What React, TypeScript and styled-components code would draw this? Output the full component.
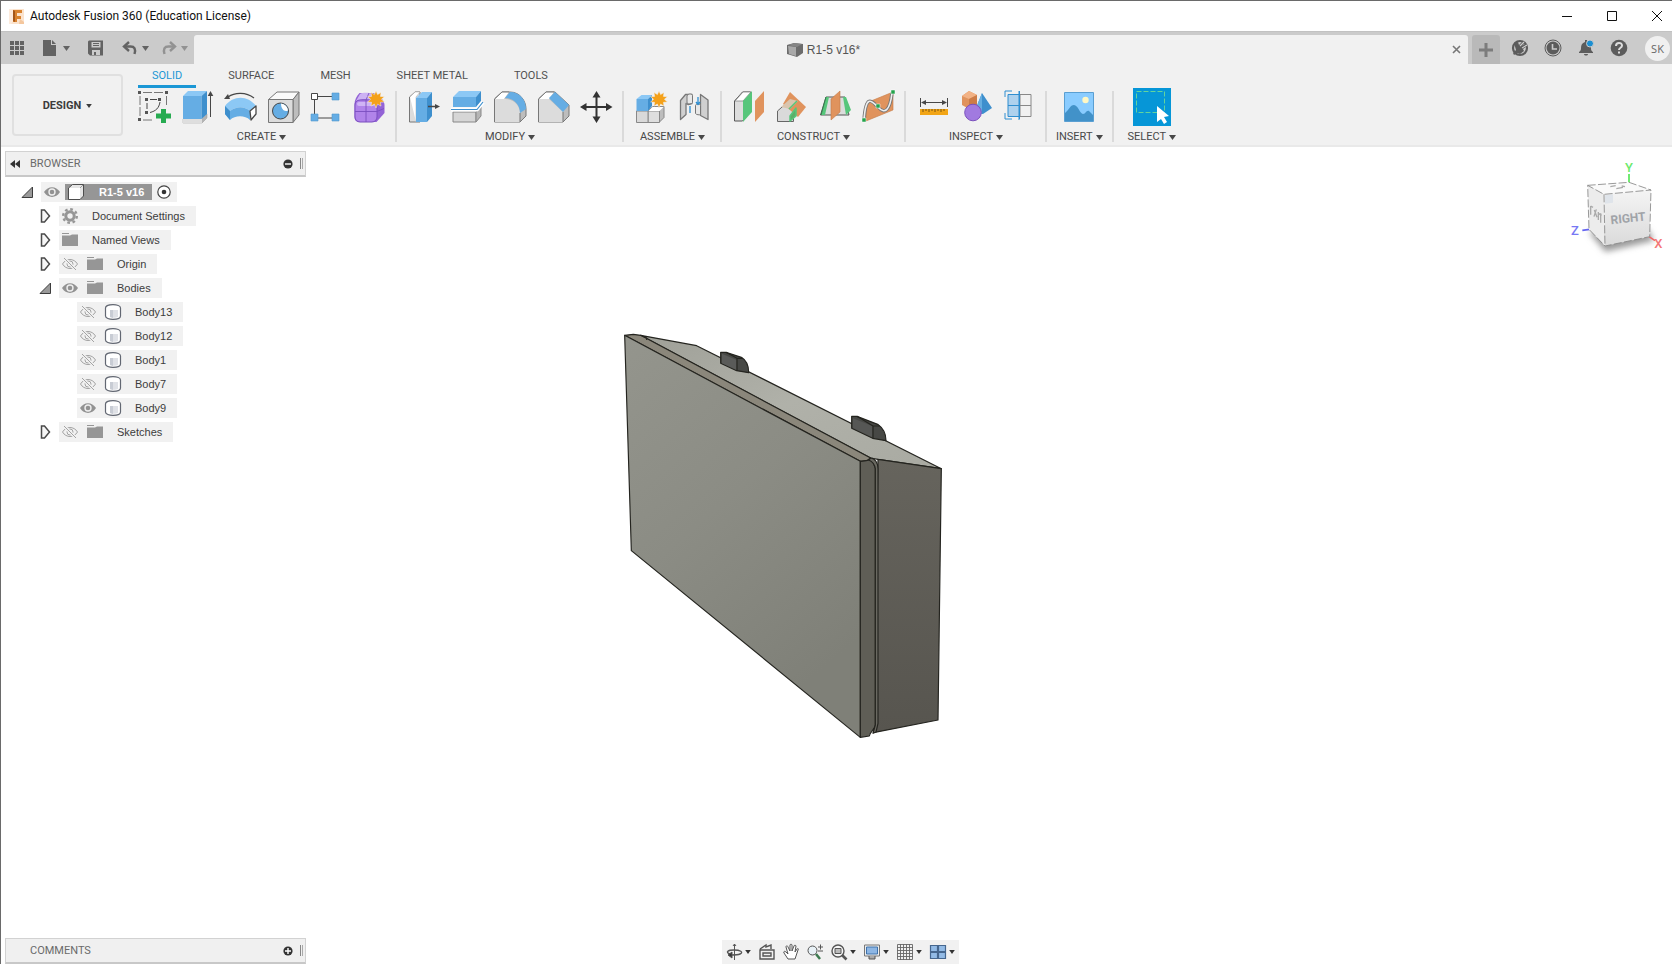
import React from "react";
import styled, { createGlobalStyle } from "styled-components";

const UI = `Roboto, "Liberation Sans", sans-serif`;
const ARIAL = `"Liberation Sans", Arial, sans-serif`;

const GlobalStyle = createGlobalStyle`
  *, *::before, *::after { box-sizing: border-box; }
  body { margin: 0; background: #fff; color: #3c3c3c; font-family: ${UI}; font-size: 11px; }
  button { margin: 0; padding: 0; border: 0; background: none; color: inherit; font: inherit; cursor: pointer; }
  ul { margin: 0; padding: 0; list-style: none; }
  svg { display: block; flex: none; overflow: visible; }
`;

const Window = styled.div`
  display: flex;
  flex-direction: column;
  min-height: 100vh;
  border-top: 1px solid #6a6a6a;
  border-left: 1px solid #6a6a6a;
`;

/* ---------- title bar ---------- */

const TitleBar = styled.header`
  display: flex;
  align-items: center;
  height: 30px;
  padding: 0 1px 0 8px;
  background: #fff;
`;

const Title = styled.span`
  flex: 1;
  margin-left: 6px;
  font-size: 12px;
  line-height: 16px;
  color: #111;
`;

const WindowControls = styled.div`
  display: flex;
  gap: 17px;
`;

const WindowButton = styled.button`
  display: flex;
  align-items: center;
  justify-content: center;
  width: 28px;
  height: 28px;
`;

/* ---------- document bar ---------- */

const DocumentBar = styled.div`
  display: flex;
  align-items: flex-end;
  height: 33px;
  background: #cbcbcb;
  border-top: 1px solid #c2c2c2;
`;

const QuickAccess = styled.div`
  display: flex;
  align-items: center;
  gap: 18px;
  width: 193px;
  height: 32px;
  padding-left: 8px;
  color: #636363;
`;

const HistoryButtons = styled.div`
  display: flex;
  gap: 12px;
`;

const QuickButton = styled.button<{ $dim?: boolean }>`
  display: flex;
  align-items: center;
  gap: 4px;
  color: ${(p) => (p.$dim ? "#929292" : "#636363")};
`;

const DocumentTab = styled.div`
  display: flex;
  flex: 1;
  align-items: center;
  height: 29px;
  padding: 0 4px;
  border-radius: 3px 3px 0 0;
  background: #f1f1f1;
`;

const DocumentName = styled.div`
  display: flex;
  flex: 1;
  align-items: center;
  justify-content: center;
  gap: 4px;
  font-family: ${ARIAL};
  font-size: 12px;
  line-height: 16px;
  color: #555;
`;

const CloseTab = styled.button`
  padding: 3px;
`;

const NewTab = styled.button`
  display: flex;
  align-items: center;
  justify-content: center;
  width: 28px;
  height: 29px;
  margin: 0 11px 0 4px;
  border-radius: 3px 3px 0 0;
  background: #b9b9b9;
`;

const AccountTools = styled.div`
  display: flex;
  align-items: center;
  gap: 15px;
  height: 32px;
  padding-right: 2px;
  color: #5c5c5c;
`;

const Avatar = styled.button`
  width: 25px;
  height: 25px;
  margin-left: 2px;
  border-radius: 50%;
  background: #f0f0f0;
  color: #666;
  font-family: "Open Sans", sans-serif;
  font-size: 11px;
  line-height: 25px;
`;

/* ---------- ribbon ---------- */

const Ribbon = styled.div`
  display: flex;
  height: 83px;
  padding-left: 11px;
  background: #f1f1f1;
  border-bottom: 2px solid #e9e9e9;
`;

const WorkspaceButton = styled.button`
  display: flex;
  align-items: center;
  justify-content: center;
  gap: 5px;
  width: 111px;
  height: 62px;
  margin-top: 10px;
  padding-top: 1px;
  border: 2px solid #e0e0e0;
  border-radius: 4px;
  font-weight: 700;
  line-height: 14px;
`;

const RibbonBody = styled.div`
  flex: 1;
  margin-left: 4px;
`;

const RibbonTabs = styled.div`
  display: flex;
  gap: 18px;
  height: 24px;
  padding-left: 11px;
`;

const RibbonTab = styled.button<{ $active?: boolean }>`
  height: 24px;
  padding: 2px 14px 0;
  border-bottom: 3px solid ${(p) => (p.$active ? "#1b97d5" : "transparent")};
  color: ${(p) => (p.$active ? "#1b97d5" : "#505050")};
  line-height: 14px;
`;

const Groups = styled.div`
  display: flex;
`;

const Group = styled.section<{ $single?: boolean; $last?: boolean }>`
  display: flex;
  flex-direction: column;
  align-items: center;
  padding: 0 ${(p) => (p.$single ? 11 : 12)}px 0 ${(p) => (p.$last ? 14 : p.$single ? 9 : 11)}px;
  background: ${(p) => (p.$last ? "none" : "linear-gradient(#dadada, #dadada) right 3px / 2px 51px no-repeat")};
`;

const GroupTools = styled.div`
  display: flex;
  gap: 11px;
  height: 41px;
`;

const ToolButton = styled.button<{ $selected?: boolean }>`
  display: flex;
  align-items: center;
  justify-content: center;
  width: ${(p) => (p.$selected ? 38 : 32)}px;
  height: 38px;
  background: ${(p) => (p.$selected ? "#0696d7" : "none")};
`;

const GroupMenu = styled.button`
  display: flex;
  align-items: center;
  gap: 3px;
  line-height: 16px;
  white-space: nowrap;
  color: #484848;
`;

/* ---------- viewport ---------- */

const Viewport = styled.main`
  position: relative;
  display: flex;
  flex: 1;
  flex-direction: column;
  justify-content: space-between;
`;

const ModelPlacement = styled.div`
  position: absolute;
  left: 599px;
  top: 173px;
`;

const CubePlacement = styled.div`
  position: absolute;
  right: 0;
  top: 13px;
`;

const BrowserPanel = styled.aside`
  position: relative;
  width: 301px;
  margin: 4px 0 0 4px;
`;

const PanelBar = styled.div`
  display: flex;
  align-items: center;
  width: 301px;
  height: 26px;
  padding: 0 2px 0 4px;
  background: #f0f0f0;
  border: 1px solid #d2d2d2;
  border-bottom: 2px solid #c8c8c8;
  color: #6a6a6a;
`;

const PanelTitle = styled.span<{ $indent?: boolean }>`
  flex: 1;
  margin-left: ${(p) => (p.$indent ? 20 : 10)}px;
  line-height: 16px;
`;

const Grip = styled.span`
  width: 3px;
  height: 11px;
  margin-left: 7px;
  border-left: 1px solid #888;
  border-right: 1px solid #aaa;
`;

const Tree = styled.ul`
  display: flex;
  flex-direction: column;
  gap: 4px;
  margin-top: 5px;
  font-family: ${ARIAL};
`;

const TreeRow = styled.li<{ $depth: number }>`
  display: flex;
  align-items: center;
  height: 20px;
  padding-left: ${(p) => 14 + p.$depth * 18}px;
`;

const Expander = styled.button`
  width: 16px;
  height: 16px;
  margin-right: 6px;
`;

const ExpanderSpace = styled.span`
  width: 22px;
`;

const TreeItem = styled.div<{ $root?: boolean }>`
  display: flex;
  align-items: center;
  gap: ${(p) => (p.$root ? 5 : 9)}px;
  height: 20px;
  padding: 0 ${(p) => (p.$root ? 6 : 11)}px 0 3px;
  background: #f1f1f1;
`;

const TreeLabel = styled.span`
  margin-left: 5px;
  line-height: 16px;
  white-space: nowrap;
`;

const RootChip = styled.span`
  display: flex;
  align-items: center;
  gap: 15px;
  height: 16px;
  padding: 0 8px 0 3px;
  background: #969696;
  color: #fff;
  font-weight: 700;
`;

const Footer = styled.footer`
  display: grid;
  grid-template-columns: 1fr auto 1fr;
  align-items: end;
  padding-left: 4px;
`;

const NavBar = styled.nav`
  display: flex;
  align-items: center;
  gap: 8px;
  height: 24px;
  margin-left: 4px;
  padding: 0 4px;
  background: #f1f1f1;
`;

const NavButton = styled.button`
  display: flex;
  align-items: center;
  gap: 3px;
  height: 20px;
`;

/* ---------- small glyphs ---------- */

const Caret = ({ w = 7, fill = "currentColor" }: { w?: number; fill?: string }) => (
  <svg width={w} height={w - 2} viewBox="0 0 7 5"><path d="M0 0h7L3.500 5z" fill={fill} /></svg>
);

const FusionLogo = () => (
  <svg width="15" height="15" viewBox="0 0 15 15">
    <path d="M0 0h15v15H0z" fill="#fbe3cd" />
    <path d="M0 0h4v12l-2 3H0z" fill="#fdebdc" />
    <path d="M4 1h9v3H8v3h4v3H8v3H4z" fill="#d9832f" />
    <path d="M4 1l2 1v11l-2-1z" fill="#a4571a" />
    <path d="M11 10l4 3v2h-5z" fill="#f4c79e" />
  </svg>
);

const GridDots = () => (
  <svg width="16" height="16" viewBox="0 0 16 16" fill="currentColor">
    {[1, 6, 11].map((y) => [1, 6, 11].map((x) => <rect key={`${x}-${y}`} x={x} y={y} width="4" height="4" />))}
  </svg>
);
const FileIcon = () => (
  <svg width="16" height="16" viewBox="0 0 16 16" fill="currentColor"><path d="M0 0h8v5h5v11H0z" /><path d="M9 0l4 4H9z" /></svg>
);
const SaveIcon = () => (
  <svg width="16" height="16" viewBox="0 0 16 16" fill="currentColor">
    <path fillRule="evenodd" d="M0 1.500L1 .5h14v15H2l-2-2zM3.500 2v5.500h9V2zM4 10v5h2v-3h2v3h4v-5z" />
    <path d="M5 3h6v1H5zM5 5h6v1H5z" />
  </svg>
);
const UndoIcon = ({ flip }: { flip?: boolean }) => (
  <svg width="16" height="16" viewBox="0 0 16 16">
    <g transform={flip ? "matrix(-1 0 0 1 16 0)" : undefined} fill="none" stroke="currentColor" strokeWidth="2">
      <path d="M7 2L2 6.500l5 4.500" strokeWidth="2.400" />
      <path d="M3 6.500h5.500c4 0 5.500 2.500 4 7.500" strokeWidth="2.400" />
    </g>
  </svg>
);
const DocCube = () => (
  <svg width="16" height="16" viewBox="0 0 16 16">
    <path d="M0 3l7-2 9 1v9l-6 4-10-3z" fill="#6c6c6c" />
    <path d="M1 4l8 1v9l-7-2z" fill="#a9a9a9" />
    <path d="M1 3l7-2 7 1-5 3z" fill="#858585" />
  </svg>
);

const ExtensionIcon = () => (
  <svg width="18" height="18" viewBox="0 0 18 18" fill="none" stroke="currentColor">
    <circle cx="9" cy="9" r="7" strokeWidth="2.200" />
    <path d="M3 4l4-1 1 3 4-4 2 2-3 3 3-2 2 2-4 3 1 2-4 3-3-1-3 2-1-2 3-3z" fill="currentColor" stroke="none" />
    <path d="M9 7l4-4M11 9l5-3" stroke="#cbcbcb" strokeWidth="1.200" />
  </svg>
);
const ClockIcon = () => (
  <svg width="18" height="18" viewBox="0 0 18 18">
    <circle cx="9" cy="9" r="8" fill="none" stroke="currentColor" />
    <circle cx="9" cy="9" r="6.500" fill="currentColor" />
    <path d="M8.500 5v5H13" fill="none" stroke="#cbcbcb" strokeWidth="1.600" />
  </svg>
);
const BellIcon = () => (
  <svg width="18" height="18" viewBox="0 0 18 18">
    <path d="M8 1h2v2c3 1 4 3 4 6 0 3 1 3 2 4v1H2v-1c1-1 2-1 2-4 0-3 1-5 4-6zM7 15h4c0 2-4 2-4 0z" fill="currentColor" />
    <circle cx="13" cy="4.500" r="3.500" fill="#1b8fd2" stroke="#cbcbcb" />
  </svg>
);
const HelpIcon = () => (
  <svg width="18" height="18" viewBox="0 0 18 18">
    <circle cx="9" cy="9" r="8.300" fill="currentColor" />
    <path d="M6 7c0-4 6-4 6-.5C12 9 9 8.500 9 11" fill="none" stroke="#ddd" strokeWidth="2" />
    <rect x="8" y="12.500" width="2" height="2" fill="#ddd" />
  </svg>
);

/* ---------- ribbon icons, 32 × 32 ---------- */

const BLUE = "#65ade4";
const DEEP = "#3e8fcd";
const INK = "#474747";
const star = "M23 0l1.600 3.600L28 1.500l-.6 3.900 4 .3-3 2.600 3 2.700-4 .3.600 3.800-3.400-2L23 17l-1.600-3.900-3.400 2 .6-3.800-4-.3 3-2.700-3-2.600 4-.3-.6-3.900 3.400 2.100z";

const Icon = ({ children }: { children: React.ReactNode }) => (
  <svg width="32" height="32" viewBox="0 0 32 32" strokeLinejoin="round">{children}</svg>
);

const icons = {
  sketch: (
    <Icon>
      <path d="M5 1.500h21M2 5v21M5 29h11M28.500 5v10" stroke="#777" strokeDasharray="9 2" fill="none" />
      <path d="M12 8.500h7M9 12v6M22 11c-1 6-4 9-10 10.500" stroke={INK} fill="none" />
      {[[0, 0], [27, 0], [0, 27], [7, 7], [20, 7], [7, 20]].map(([x, y]) => <rect key={`${x}-${y}`} x={x} y={y} width="3" height="3" fill="#555" />)}
      <path d="M23 18h5v4.500h5v5h-5V32h-5v-4.500h-5v-5h5z" fill="#27ab51" />
    </Icon>
  ),
  extrude: (
    <Icon>
      <path d="M2 28h19l5-5v4l-5 5H2z" fill="#b4b4b4" stroke="#999" strokeWidth=".5" />
      <path d="M2 28h19v4H2z" fill="#dedede" />
      <path d="M2 5h18.500v23H2z" fill={BLUE} /><path d="M2 5l5-5h19l-5.500 5z" fill="#8cc8f5" /><path d="M20.500 5L26 0v23l-5.500 5z" fill={DEEP} />
      <path d="M29.500 4v22" stroke={INK} /><path d="M29.500 0l2.800 5h-5.600z" fill={INK} />
    </Icon>
  ),
  revolve: (
    <Icon>
      <path d="M1 15C9 4 24 4 32 15l-6 5c-6-5-13-5-20 0z" fill="#8cc8f5" />
      <path d="M1 15l5 5c7-5 14-5 20 0v9c-5-5-15-5-20 0l-5-6z" fill={BLUE} />
      <path d="M1 15l5 5v9l-5-6z" fill={DEEP} />
      <path d="M26 20l6-5v8l-5 6z" fill="#fff" stroke={INK} strokeWidth="1.300" />
      <path d="M30 7C22 1 11 1 4 6" fill="none" stroke={INK} strokeWidth="1.200" /><path d="M0 8l4-5 2 5z" fill={INK} />
    </Icon>
  ),
  hole: (
    <Icon>
      <path d="M1.500 8.500L10 1h22l-6 7.500z" fill="#fafafa" stroke="#777" /><path d="M26 8.500L32 1v23l-6 7.500z" fill="#bdbdbd" stroke="#777" />
      <path d="M1.500 8.500H26v23H1.500z" fill="#dcdcdc" stroke="#777" />
      <circle cx="13.500" cy="20" r="8" fill={BLUE} stroke={INK} />
      <path d="M14 12.500a7.500 7.500 0 0 1 7 7c-4 2-7-2-7-7z" fill="#fff" />
    </Icon>
  ),
  pattern: (
    <Icon>
      <path d="M7 5.500h17M4.500 8v17M8 27h16" stroke={INK} fill="none" />
      <path d="M1.500 2.500h6v6h-6z" fill="#fff" stroke={INK} />
      <path d="M22 2h7v7h-7zM1 23h7v7H1zM22 23h7v7h-7z" fill={BLUE} stroke="#4e97cf" strokeWidth=".6" />
    </Icon>
  ),
  form: (
    <Icon>
      <path d="M1.500 13c0-4 2-8 5-11h14c5 2 11 7 11 12v8l-8 9H6c-3 0-4.500-2-4.500-5z" fill="#9363d6" />
      <path d="M3 10l4-7c4-2 9-1 13 0l-2 6c-5-1-10-1-15 1z" fill="#cdb2f4" />
      <rect x="2" y="9" width="22" height="22" rx="5" fill="#b184ea" stroke="#7b4fc0" />
      <rect x="4" y="11" width="18" height="4" rx="2" fill="#cfb4f5" />
      <path d="M2 20.500h22l7-3M13 9v22M13 9l3-7" fill="none" stroke="#7b4fc0" strokeWidth=".9" />
      <path d={star} fill="#f4a11a" stroke="#f1f1f1" strokeWidth=".5" />
    </Icon>
  ),
  pressPull: (
    <Icon>
      <path d="M1.500 31V6L7 1h5v30z" fill="#dcdcdc" stroke="#777" /><path d="M2 6l5-5h5L8 6v25" fill="#fff" stroke="#aaa" strokeWidth=".5" />
      <path d="M8 7h11v24H8z" fill={BLUE} /><path d="M8 7l6-6h10l-5 6z" fill="#8cc8f5" /><path d="M19 7l5-6v24l-5 6z" fill={DEEP} />
      <path d="M20 15.500h8" stroke={INK} strokeWidth="1.500" /><path d="M32 15.500l-5-2.500v5z" fill={INK} />
    </Icon>
  ),
  offset: (
    <Icon>
      <path d="M2 21h23v10H2z" fill="#d6d6d6" stroke="#888" /><path d="M25 21l5-5v9l-5 6z" fill="#b5b5b5" stroke="#888" />
      <path d="M2 6h23v10H2z" fill={BLUE} /><path d="M2 6l6-6h22l-5 6z" fill="#8cc8f5" /><path d="M25 6l5-6v10l-5 6z" fill={DEEP} />
      <path d="M0 18.500h26l6-7.500" fill="none" stroke="#fff" strokeWidth="4" /><path d="M0 18.500h26l6-7.500" fill="none" stroke={DEEP} strokeWidth="1.200" />
    </Icon>
  ),
  fillet: (
    <Icon>
      <path d="M.5 31V8L8 1h8c10 0 16 9 16 17v7l-6 6z" fill="#bdbdbd" stroke="#777" />
      <path d="M.5 31V8h11C20 8 26 15 26 22v9z" fill="#dcdcdc" /><path d="M1 8l7-7h7l-5 7z" fill="#fff" />
      <path d="M11 7l5-6c10 0 16 8 16 17l-6 4C26 13 19 7 11 7z" fill={BLUE} />
      <path d="M.5 31V8L8 1h7M26 22v9" fill="none" stroke="#777" />
    </Icon>
  ),
  chamfer: (
    <Icon>
      <path d="M1.500 31V8L9 1h9l14 13v11l-6 6z" fill="#bdbdbd" stroke="#777" />
      <path d="M1.500 31V8H12l14 13v10z" fill="#dcdcdc" /><path d="M2 8l7-7h8l-5 7z" fill="#fff" />
      <path d="M12 7l6-6 14 13-6 7z" fill={BLUE} /><path d="M1.500 31V8L9 1h8M26 21v10" fill="none" stroke="#777" />
    </Icon>
  ),
  move: (
    <Icon>
      <path d="M16.500 4v24M5 16h23" stroke="#333" strokeWidth="2" />
      <path d="M16.500 0l4 6.500h-8zM16.500 32l4-6.500h-8zM0 16l6.500-4v8zM32.500 16L26 12v8z" fill="#333" />
    </Icon>
  ),
  component: (
    <Icon>
      <path d="M13 19.500l5-4h11v11l-5 5H13z" fill="#bdbdbd" stroke="#888" /><path d="M13 20h11.500v11.500H13z" fill="#dedede" stroke="#888" />
      <path d="M1.500 20H13v11.500H1.500z" fill="#d9d9d9" stroke="#888" /><path d="M13.500 20l4-4h11l-4 4z" fill="#fff" />
      <path d="M1.500 8H13v12H1.500z" fill={BLUE} /><path d="M1.500 8l5-4H17l-4 4z" fill="#8cc8f5" /><path d="M13 8l4-4v11l-4 5z" fill={DEEP} />
      <path d={star} fill="#f4a11a" stroke="#f1f1f1" strokeWidth=".5" transform="translate(1)" />
    </Icon>
  ),
  joint: (
    <Icon>
      <path d="M2.500 28.500V9.500L7.500 3.500h6.500v9l-4 1-2-1v11z" fill="#d0d0d0" stroke="#777" strokeWidth="1.300" />
      <path d="M9 5v7c1 1.500 5 1 5.500-.5V4.500c0-2-5-2-5.500.5z" fill="#e8e8e8" stroke="#777" />
      <path d="M22.500 3.500L30 9v19.500l-7.500-4z" fill="#d0d0d0" stroke="#777" strokeWidth="1.300" />
      <path d="M17.500 14.500v8c1 1.500 4 1.500 5 1v-9c0-2-5-2-5 0z" fill="#e8e8e8" stroke="#777" />
      <path d="M12 15v7M20 6v7M18 11l2 2.500 2-2.500" stroke="#2f8ed0" fill="none" strokeWidth="1.300" />
    </Icon>
  ),
  plane: (
    <Icon>
      <path d="M1.500 30V10l8-9h8v20l-8 9z" fill="#ddd" stroke="#555" /><path d="M2 10l8-9h8l-8 9z" fill="#fff" stroke="#777" strokeWidth=".7" />
      <path d="M10 10l9-10v21l-9 10z" fill="#57c67b" /><path d="M22 10L31 0v21l-9 10z" fill="#e0935d" />
    </Icon>
  ),
  anglePlane: (
    <Icon>
      <path d="M1.500 30.500V20l8-7 8 7v10.500z" fill="#dadada" stroke="#666" />
      <path d="M14 1l16 15-8 10-15-13z" fill="#e0935d" />
      <path d="M5 16l9-8 8 2-8 8z" fill="#d9c5ae" /><path d="M13 18l8-8M14 25l6-8v8l-6 5z" fill="#5eae69" stroke="#57c67b" strokeWidth="1.500" />
    </Icon>
  ),
  midPlane: (
    <Icon>
      <path d="M1.500 24L7 6h19l4 18z" fill="#dcdcdc" stroke="#555" /><path d="M2 24L7 6h3L6 24zM24 6h3l5 13-5 5z" fill="#57c67b" /><path d="M2 24L7 6" stroke="#337a4b" />
      <path d="M12 8l9-8v21l-9 8z" fill="#e0935d" stroke="#c57b47" strokeWidth=".6" />
    </Icon>
  ),
  curvePlane: (
    <Icon>
      <path d="M4 12L31 1v18L4 30z" fill="#e0935d" stroke="#c57b47" strokeWidth=".6" />
      <path d="M2 29C4 0 11 12 16 16c7 8 12 3 14-14" fill="none" stroke="#777" strokeWidth="3.400" /><path d="M2 29C4 0 11 12 16 16c7 8 12 3 14-14" fill="none" stroke="#eee" strokeWidth="1.600" />
      {[[0, 27], [14, 13], [29, -1]].map(([x, y]) => <rect key={x} x={x} y={y} width="4" height="4" fill="#23a34c" stroke="#fff" strokeWidth=".5" />)}
    </Icon>
  ),
  measure: (
    <Icon>
      <path d="M3 18h28v6H3z" fill="#f2a516" /><path d="M6 18v3M9 18v2M12 18v3M15 18v2M18 18v3M21 18v2M24 18v3M27 18v2" stroke="#7a5410" />
      <path d="M3.500 7v9M30.500 7v9M7 11.500h20" stroke={INK} /><path d="M4 11.500L9 9v5zM30 11.500L25 9v5z" fill={INK} />
    </Icon>
  ),
  interference: (
    <Icon>
      <path d="M2 5l7-5 8 4v10l-8 4-7-4z" fill="#e0935d" /><path d="M2 5l7-5 8 4-8 4z" fill="#f2b285" /><path d="M9 8l8-4v10l-8 4z" fill="#cd7c47" />
      <path d="M22 2l10 15-9 6-9-1z" fill={DEEP} /><path d="M22 2v21l-8-1z" fill="#66ade0" />
      <circle cx="13" cy="21.500" r="8.300" fill="#a17ae0" stroke="#7a50bd" />
    </Icon>
  ),
  section: (
    <Icon>
      <path d="M17 3.500h11v22H17zM17 14.500h11" fill="none" stroke="#888" /><path d="M5 3.500h11v22H5z" fill="#aed1ed" />
      <path d="M5 3.500h11M5 14.500h11M5 25.500h11M5 3.500v22M16 0v29" fill="none" stroke="#2f8ed0" /><path d="M16.500 0v28" stroke="#2f8ed0" />
      <path d="M2 6V0h7M2 22v6h7" fill="none" stroke="#2f8ed0" />
    </Icon>
  ),
  image: (
    <Icon>
      <path d="M1.500 1.500h29v29h-29z" fill="#8accff" stroke="#5a9fd2" /><circle cx="22.500" cy="9" r="3.200" fill="#fff7c4" />
      <path d="M2 22c4-3 5-8 9-8s6 9 9 9 3-4 6-3l4 4v6H2z" fill="#4292c9" />
    </Icon>
  ),
  select: (
    <Icon>
      <path d="M.5.500h28v21H.500z" fill="none" stroke="#63d49d" strokeDasharray="5 2" />
      <path d="M21 15v16l4-3 3 5 3-2-3-5 5-1z" fill="#fff" />
    </Icon>
  ),
};

type Tool = keyof typeof icons;
const groups: { name: string; tools: Tool[] }[] = [
  { name: "CREATE", tools: ["sketch", "extrude", "revolve", "hole", "pattern", "form"] },
  { name: "MODIFY", tools: ["pressPull", "offset", "fillet", "chamfer", "move"] },
  { name: "ASSEMBLE", tools: ["component", "joint"] },
  { name: "CONSTRUCT", tools: ["plane", "anglePlane", "midPlane", "curvePlane"] },
  { name: "INSPECT", tools: ["measure", "interference", "section"] },
  { name: "INSERT", tools: ["image"] },
  { name: "SELECT", tools: ["select"] },
];

/* ---------- browser tree ---------- */

const Eye = ({ off }: { off?: boolean }) => (
  <svg width="16" height="16" viewBox="0 0 16 16">
    {off ? (
      <g fill="none" stroke="#a3a3a3"><path d="M.5 8C4 2 12 2 15.500 8 12 14 4 14 .5 8z" /><circle cx="8" cy="8" r="3" /><path d="M2 2l12 12" stroke="#f1f1f1" strokeWidth="3" /><path d="M2 2l12 12" /></g>
    ) : (
      <g><path d="M0 8C4 1.500 12 1.500 16 8 12 14.500 4 14.500 0 8z" fill="#929292" /><circle cx="8" cy="8" r="3" fill="none" stroke="#eee" strokeWidth="1.400" /></g>
    )}
  </svg>
);
const Folder = () => (
  <svg width="16" height="16" viewBox="0 0 16 16"><path d="M0 1h7v1H0zM0 3.500h8l2-1h6V14H0z" fill="#969696" /></svg>
);
const Gear = () => (
  <svg width="16" height="16" viewBox="0 0 16 16">
    <circle cx="8" cy="8" r="4.200" fill="none" stroke="#969696" strokeWidth="3" />
    <circle cx="8" cy="8" r="6.800" fill="none" stroke="#969696" strokeWidth="2.400" strokeDasharray="2.670 2.670" />
  </svg>
);
const BodyIcon = () => (
  <svg width="16" height="16" viewBox="0 0 16 16">
    <path d="M.5 4C.5-.5 15.500-.5 15.500 4v8c0 4.500-15 4.500-15 0z" fill="#fff" stroke="#626772" strokeWidth="1.200" />
    <path d="M5 6h8v7c-2 1-6 1-8 0z" fill="#dfe1e6" /><path d="M5 6h3v8l-3-1z" fill="#c8ccd4" />
  </svg>
);
const RootCube = () => (
  <svg width="16" height="16" viewBox="0 0 16 16">
    <path d="M.5 4l4-3.500h11V12L12 15.500H.500z" fill="#e5e5e5" stroke="#4d4d4d" /><path d="M1 4h11v11H1z" fill="#fff" /><path d="M12 4l3-3" stroke="#999" />
  </svg>
);
const Arrow = ({ open }: { open?: boolean }) => (
  <svg width="16" height="16" viewBox="0 0 16 16">
    {open ? <path d="M3 13.500L13.500 3v10.500z" fill="#9a9a9a" stroke="#3d3d3d" /> : <path d="M4.500 2v12h3L12.500 8 7.500 2z" fill="#f6f6f6" stroke="#4a4a4a" strokeWidth="1.500" />}
  </svg>
);

interface Node { label: string; depth: number; open?: boolean; leaf?: boolean; eye?: "on" | "off"; icon: "gear" | "folder" | "body" }
const nodes: Node[] = [
  { label: "Document Settings", depth: 1, icon: "gear" },
  { label: "Named Views", depth: 1, icon: "folder" },
  { label: "Origin", depth: 1, eye: "off", icon: "folder" },
  { label: "Bodies", depth: 1, eye: "on", icon: "folder", open: true },
  { label: "Body13", depth: 2, eye: "off", icon: "body", leaf: true },
  { label: "Body12", depth: 2, eye: "off", icon: "body", leaf: true },
  { label: "Body1", depth: 2, eye: "off", icon: "body", leaf: true },
  { label: "Body7", depth: 2, eye: "off", icon: "body", leaf: true },
  { label: "Body9", depth: 2, eye: "on", icon: "body", leaf: true },
  { label: "Sketches", depth: 1, eye: "off", icon: "folder" },
];
const nodeIcons = { gear: <Gear />, folder: <Folder />, body: <BodyIcon /> };

/* ---------- navigation icons ---------- */

const NavIcon = ({ children }: { children: React.ReactNode }) => (
  <svg width="16" height="16" viewBox="0 0 16 16" fill="none" stroke="#555">{children}</svg>
);
const navTools: { name: string; menu?: boolean; icon: React.ReactNode }[] = [
  { name: "Orbit", menu: true, icon: <NavIcon><path d="M8.500 0v16M7 2l1.500-2L10 2" /><path d="M4 10C-1 8 2 6 8 6s10 2 6 4c-2 1-5 1-9 1" strokeWidth="1.400" /><path d="M6 8l-4 3 4 3z" fill="#333" /></NavIcon> },
  { name: "Look at", icon: <NavIcon><path d="M1 6h14v9H1zM4 9h8v3H4zM1 5l6-4v2l5-2v4" strokeWidth="1.400" /></NavIcon> },
  { name: "Pan", icon: <NavIcon><path d="M5 15L1 9c-1-2 1-2 2-1l2 2-2-7c0-2 2-1 2 0l2 4V1c0-1 2-1 2 0v6l2-5c0-1 2-1 2 0l-1 6 2-3c1-1 2 0 1 1l-3 9z" fill="#fff" /></NavIcon> },
  { name: "Zoom", icon: <NavIcon><circle cx="5.500" cy="6.500" r="4.500" fill="#e8f1f6" /><path d="M9 10l4 5" stroke="#3c7a50" strokeWidth="2.500" /><path d="M11 3h5M13.500 .5v5M11 7h5" /></NavIcon> },
  { name: "Fit", menu: true, icon: <NavIcon><circle cx="7" cy="7" r="6" fill="#f6f6f6" strokeWidth="1.400" /><path d="M4 4.500h6v5H4z" fill="#bbb" /><path d="M11 11l4.500 4.500" strokeWidth="2.600" /></NavIcon> },
  { name: "Display settings", menu: true, icon: <NavIcon><path d="M.5 1h15v11H.500z" fill="#eee" stroke="#777" /><path d="M2.500 3h11v7h-11z" fill="#8db6e4" stroke="#3e72ab" /><path d="M5 12v3h6v-3" fill="#aaa" /></NavIcon> },
  { name: "Grid and snaps", menu: true, icon: <NavIcon><path d="M.5.500h15v15H.500zM3.500 0v16M6.500 0v16M9.500 0v16M12.500 0v16M0 3.500h16M0 6.500h16M0 9.500h16M0 12.500h16" stroke="#666" strokeWidth=".9" /></NavIcon> },
  { name: "Viewports", menu: true, icon: <NavIcon><path d="M.5 1.500h7v6h-7zM8.500 1.500h7v6h-7zM.5 8.500h7v6h-7zM8.500 8.500h7v6h-7z" fill="#93bbe6" stroke="#46678f" strokeWidth="1.200" /></NavIcon> },
];

/* ---------- drawings in the viewport ---------- */

const Model = () => (
  <svg width="370" height="430" viewBox="0 0 1110 1290" stroke="#24241f" strokeWidth="3.500" strokeLinejoin="round" role="img" aria-label="Solid body">
    <defs>
      <linearGradient id="front" x1="0" y1="0" x2=".5" y2="1"><stop offset="0" stopColor="#94958d" /><stop offset=".5" stopColor="#8b8c84" /><stop offset="1" stopColor="#7f8078" /></linearGradient>
      <linearGradient id="side" x1="0" y1="0" x2="0" y2="1"><stop offset="0" stopColor="#66645d" /><stop offset="1" stopColor="#57554f" /></linearGradient>
      <linearGradient id="top" x1="0" y1="0" x2="1" y2="1"><stop offset="0" stopColor="#9fa098" /><stop offset=".5" stopColor="#b0b1a9" /><stop offset="1" stopColor="#a9aaa2" /></linearGradient>
    </defs>
    <path d="M122 46L290 77 1024 446 834 418 812 414z" fill="url(#top)" />
    <path d="M834 418L1024 446 1014 1200 820 1238z" fill="url(#side)" />
    <path d="M74 46L100 43 122 46 812 414 800 422 781 424z" fill="#8b877b" />
    <path d="M122 46L140 54V60" fill="none" />
    <path d="M74 46L781 424V1252L94 692z" fill="url(#front)" />
    <path d="M781 424C800 424 806 416 818 424L826 444V1215C826 1225 810 1235 808 1248L781 1252z" fill="#5f5e56" />
    <path d="M812 414C826 415 834 430 834 446V1210L828 1236 819 1240 826 1215V446C824 434 816 424 806 420z" fill="#6a6961" />
    <path d="M362 97L378 97 424 112C438 120 446 138 446 158L410 152 362 130z" fill="#474845" />
    <path d="M366 101L410 120V150L366 130z" fill="#5a5b59" stroke="none" /><path d="M378 97L411 115V152M411 115H428" fill="none" />
    <path d="M755 289L771 289 833 313C850 325 858 344 858 362L818 355 755 325z" fill="#474845" />
    <path d="M759 295L817 318V352L759 324z" fill="#565755" stroke="none" /><path d="M771 289L819 318V355M819 318H838" fill="none" />
  </svg>
);

const ViewCube = () => (
  <svg width="105" height="100" viewBox="440 480 315 300" role="img" aria-label="View cube">
    <defs>
      <linearGradient id="cubeFace" x1="0" y1="0" x2="0" y2="1"><stop offset="0" stopColor="#f4f4f4" /><stop offset="1" stopColor="#dadada" /></linearGradient>
      <filter id="soft" x="-20%" y="-40%" width="140%" height="180%"><feGaussianBlur stdDeviation="9" /></filter>
    </defs>
    <path d="M505 695L555 755 700 722 685 690z" fill="#9a9a9a" filter="url(#soft)" />
    <path d="M626 522v26" stroke="#55e655" strokeWidth="5" /><path d="M486 691l22-3" stroke="#6464f0" strokeWidth="5" /><path d="M686 710l18 12" stroke="#f06464" strokeWidth="5" />
    <path d="M502 556L626 547 692 570 551 583z" fill="#fafafa" /><path d="M502 556L551 583 554 738 506 688z" fill="#ececec" /><path d="M551 583L692 570 688 710 554 738z" fill="url(#cubeFace)" />
    <path d="M554 586l24-3v25l-24 3z" fill="#dfe4ea" />
    <path d="M502 556L626 547 692 570 551 583 502 556 506 688 554 738 688 710 692 570M551 583L554 738" fill="none" stroke="#858585" strokeWidth="2.500" strokeDasharray="24 7" />
    <path d="M511 618v26M511 618l7 4M522 630l8 22M528 628l-7 22M534 636v24M541 640v28M534 640l10 6M570 560l16-3M588 566l20-4M604 558l10 2" fill="none" stroke="#aaa" strokeWidth="4" />
    <g fontFamily="Roboto, sans-serif" textAnchor="middle">
      <text x="623" y="667" fontSize="36" fontWeight="700" fill="#a0a3a8" transform="rotate(-6 623 652)">RIGHT</text>
      <text x="626" y="516" fontSize="39" fontWeight="500" fill="#6bea6b">Y</text>
      <text x="464" y="706" fontSize="39" fontWeight="500" fill="#7878f4">Z</text>
      <text x="714" y="744" fontSize="39" fontWeight="500" fill="#f47878">X</text>
    </g>
  </svg>
);

export default function App() {
  return (
    <>
      <GlobalStyle />
      <Window>
        <TitleBar>
          <FusionLogo />
          <Title>Autodesk Fusion 360 (Education License)</Title>
          <WindowControls>
            <WindowButton aria-label="Minimize"><svg width="10" height="10"><path d="M0 5.500h10" stroke="#111" /></svg></WindowButton>
            <WindowButton aria-label="Maximize"><svg width="10" height="10"><path d="M.5.500h9v9h-9z" fill="none" stroke="#111" /></svg></WindowButton>
            <WindowButton aria-label="Close"><svg width="10" height="10"><path d="M0 0l10 10M10 0L0 10" stroke="#111" /></svg></WindowButton>
          </WindowControls>
        </TitleBar>

        <DocumentBar>
          <QuickAccess>
            <QuickButton aria-label="Data panel"><GridDots /></QuickButton>
            <QuickButton aria-label="File"><FileIcon /><Caret /></QuickButton>
            <QuickButton aria-label="Save"><SaveIcon /></QuickButton>
            <HistoryButtons>
              <QuickButton aria-label="Undo"><UndoIcon /><Caret /></QuickButton>
              <QuickButton aria-label="Redo" $dim><UndoIcon flip /><Caret /></QuickButton>
            </HistoryButtons>
          </QuickAccess>
          <DocumentTab>
            <DocumentName><DocCube /><span>R1-5 v16*</span></DocumentName>
            <CloseTab aria-label="Close document"><svg width="9" height="9"><path d="M1 1l7 7M8 1L1 8" stroke="#777" strokeWidth="1.600" /></svg></CloseTab>
          </DocumentTab>
          <NewTab aria-label="New design"><svg width="14" height="14"><path d="M7 0v14M0 7h14" stroke="#7c7c7c" strokeWidth="3" /></svg></NewTab>
          <AccountTools>
            <button aria-label="Extensions"><ExtensionIcon /></button>
            <button aria-label="Job status"><ClockIcon /></button>
            <button aria-label="Notifications"><BellIcon /></button>
            <button aria-label="Help"><HelpIcon /></button>
            <Avatar>SK</Avatar>
          </AccountTools>
        </DocumentBar>

        <Ribbon>
          <WorkspaceButton>DESIGN <Caret w={6} /></WorkspaceButton>
          <RibbonBody>
            <RibbonTabs role="tablist">
              {["SOLID", "SURFACE", "MESH", "SHEET METAL", "TOOLS"].map((t, i) => (
                <RibbonTab key={t} role="tab" aria-selected={i === 0} $active={i === 0}>{t}</RibbonTab>
              ))}
            </RibbonTabs>
            <Groups>
              {groups.map((g) => (
                <Group key={g.name} $single={g.tools.length === 1} $last={g.name === "SELECT"}>
                  <GroupTools>
                    {g.tools.map((t) => <ToolButton key={t} aria-label={t} $selected={t === "select"}>{icons[t]}</ToolButton>)}
                  </GroupTools>
                  <GroupMenu>{g.name} <Caret w={7} /></GroupMenu>
                </Group>
              ))}
            </Groups>
          </RibbonBody>
        </Ribbon>

        <Viewport>
          <ModelPlacement><Model /></ModelPlacement>
          <CubePlacement><ViewCube /></CubePlacement>

          <BrowserPanel>
            <PanelBar>
              <button aria-label="Collapse browser"><svg width="10" height="8"><path d="M5 0v8L0 4zM10 0v8L5 4z" fill="#333" /></svg></button>
              <PanelTitle>BROWSER</PanelTitle>
              <button aria-label="Hide browser"><svg width="10" height="10"><circle cx="5" cy="5" r="4.600" fill="#333" /><path d="M2 5h6" stroke="#fff" strokeWidth="1.400" /></svg></button>
              <Grip />
            </PanelBar>
            <Tree>
              <TreeRow $depth={0}>
                <Expander aria-label="Collapse R1-5 v16"><Arrow open /></Expander>
                <TreeItem $root>
                  <Eye />
                  <RootChip><RootCube /><span>R1-5 v16</span></RootChip>
                  <svg width="14" height="14"><circle cx="7" cy="7" r="6.200" fill="#fff" stroke="#444" strokeWidth="1.200" /><circle cx="7" cy="7" r="2.300" fill="#333" /></svg>
                </TreeItem>
              </TreeRow>
              {nodes.map((n) => (
                <TreeRow key={n.label} $depth={n.depth}>
                  {n.leaf ? <ExpanderSpace /> : <Expander aria-label={`Toggle ${n.label}`}><Arrow open={n.open} /></Expander>}
                  <TreeItem>
                    {n.eye && <Eye off={n.eye === "off"} />}
                    {nodeIcons[n.icon]}
                    <TreeLabel>{n.label}</TreeLabel>
                  </TreeItem>
                </TreeRow>
              ))}
            </Tree>
          </BrowserPanel>

          <Footer>
            <PanelBar>
              <PanelTitle $indent>COMMENTS</PanelTitle>
              <button aria-label="Add comment"><svg width="10" height="10"><circle cx="5" cy="5" r="4.600" fill="#333" /><path d="M2 5h6M5 2v6" stroke="#fff" strokeWidth="1.400" /></svg></button>
              <Grip />
            </PanelBar>
            <NavBar aria-label="Navigation">
              {navTools.map((t) => (
                <NavButton key={t.name} aria-label={t.name}>{t.icon}{t.menu && <Caret w={6} fill="#333" />}</NavButton>
              ))}
            </NavBar>
          </Footer>
        </Viewport>
      </Window>
    </>
  );
}
